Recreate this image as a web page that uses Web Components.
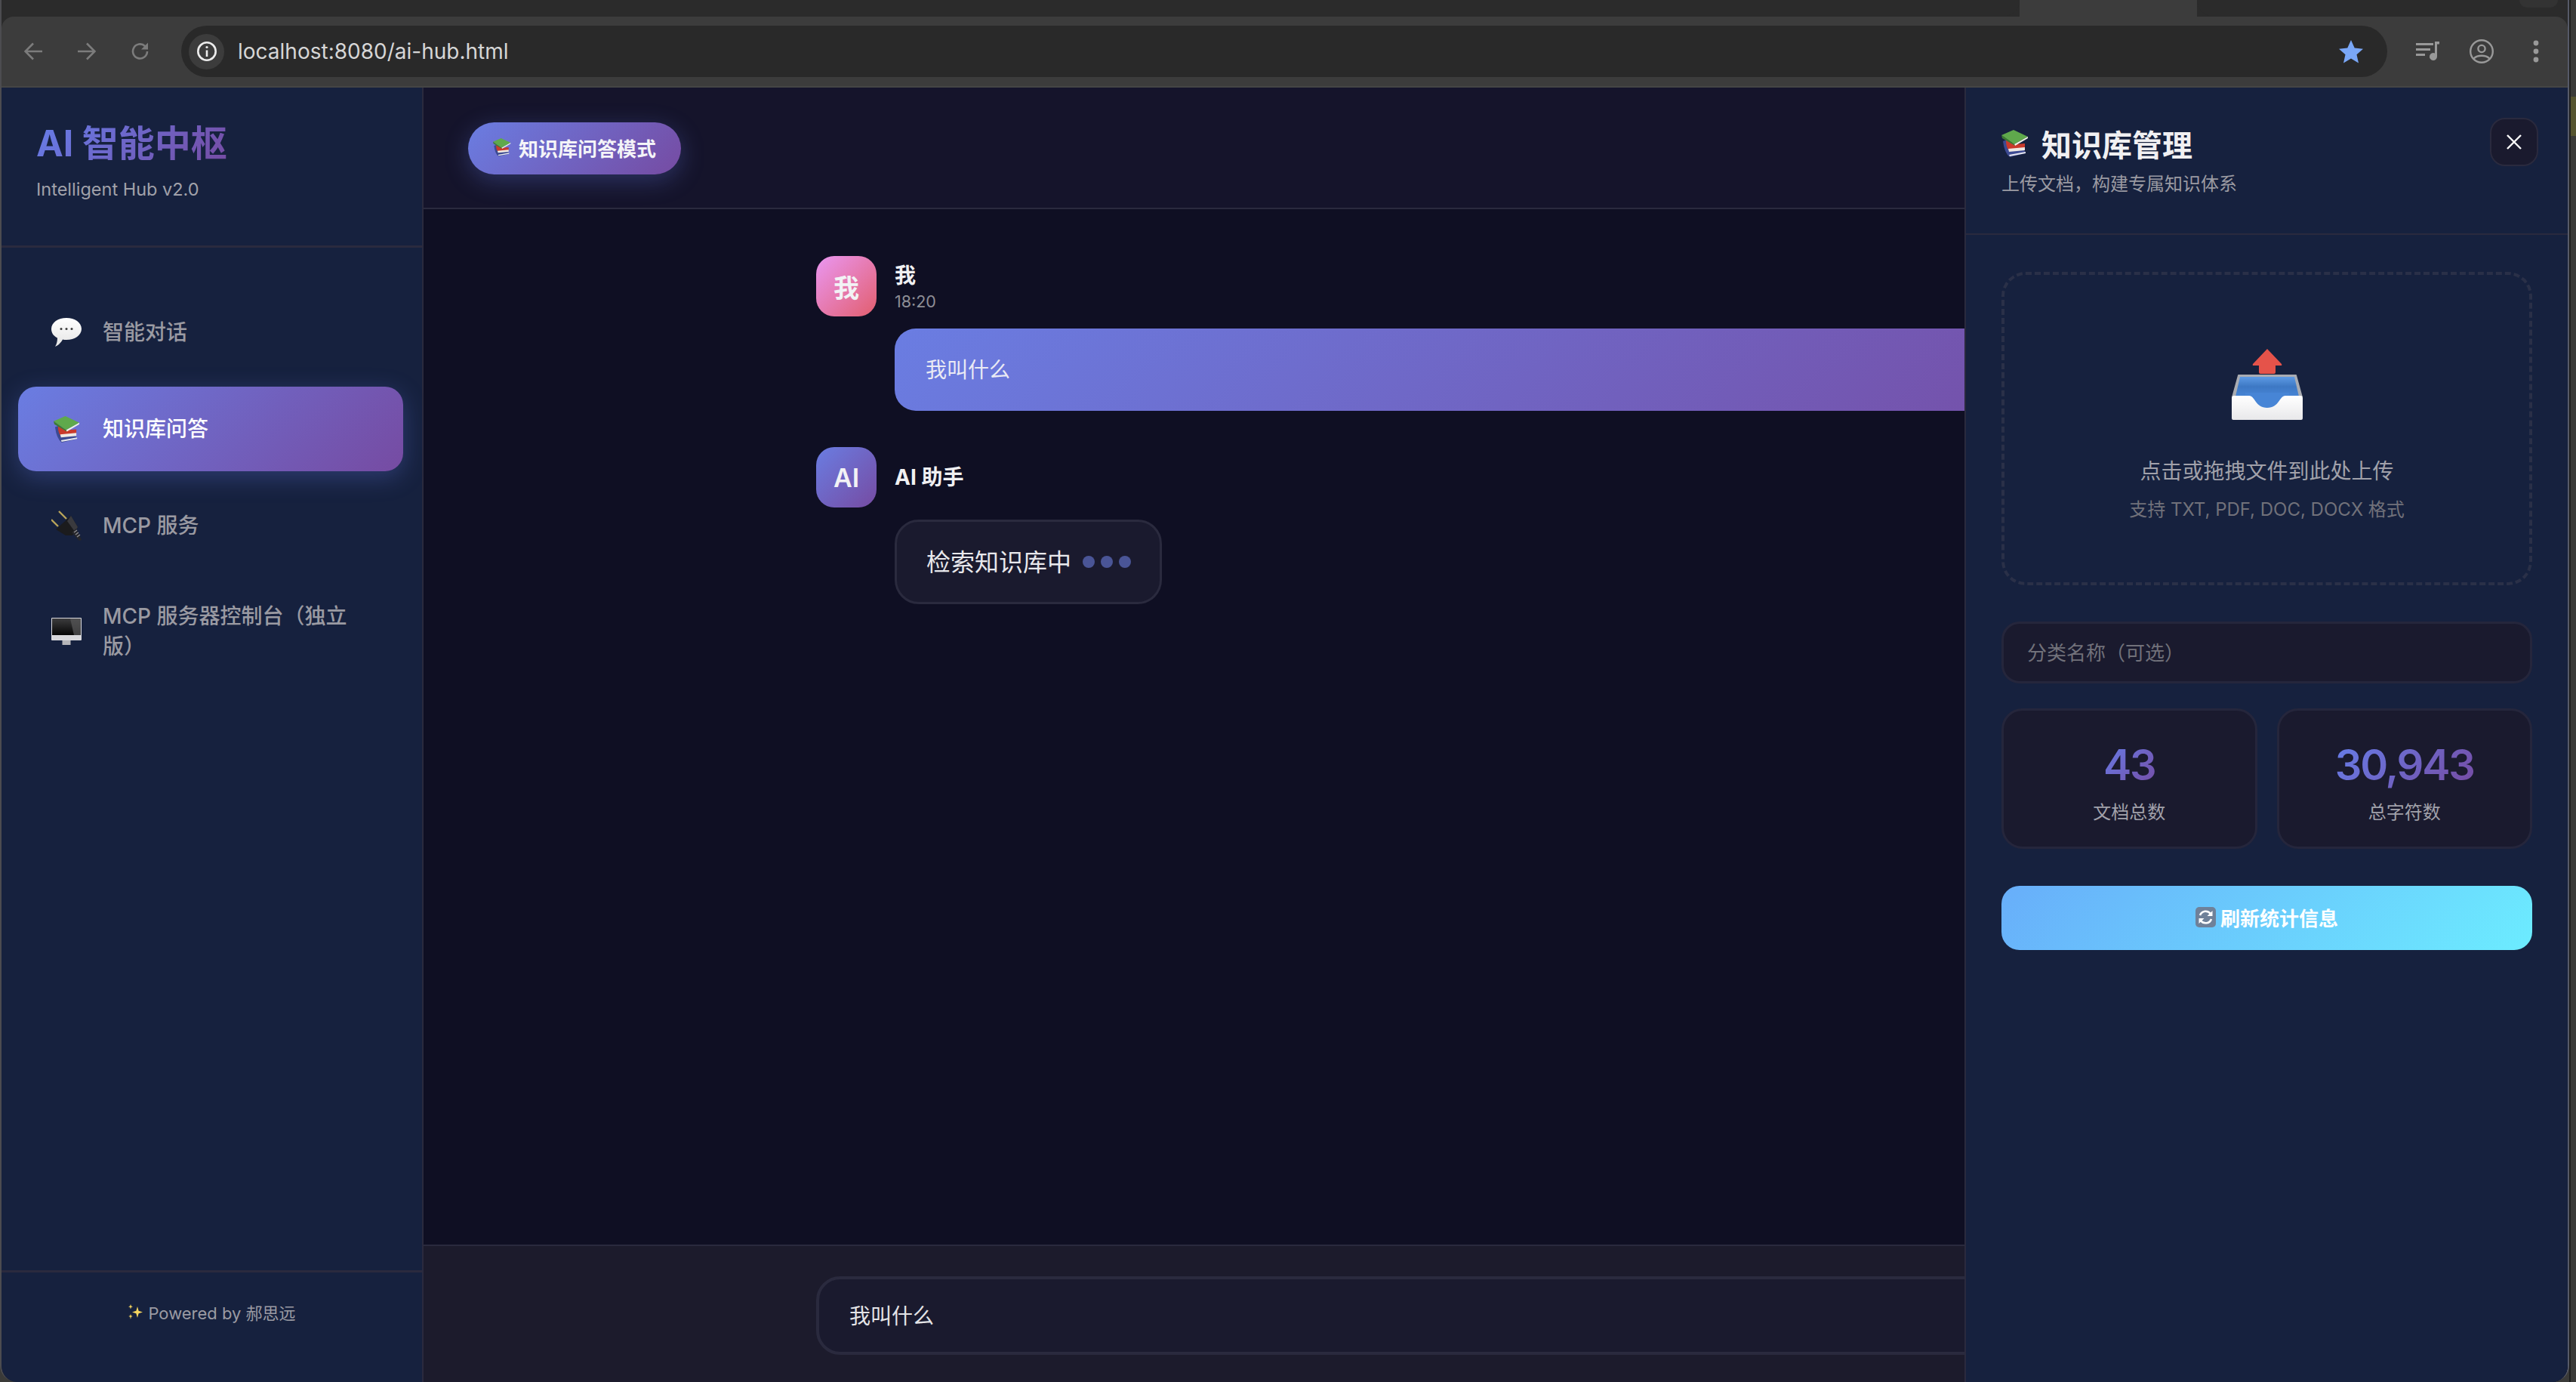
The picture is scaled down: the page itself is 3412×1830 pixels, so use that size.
<!DOCTYPE html>
<html lang="zh-CN">
<head>
<meta charset="utf-8">
<title>AI 智能中枢</title>
<style>
  html, body { margin: 0; height: 100%; overflow: hidden; background: #3a3a38; }
  body { font-family: Inter, "Noto Sans CJK SC", sans-serif; display: flex; }
</style>
</head>
<body>
<hub-window>
  <browser-chrome url="localhost:8080/ai-hub.html"></browser-chrome>
  <hub-app>
    <hub-sidebar slot="sidebar">
      <nav-item icon="balloon">智能对话</nav-item>
      <nav-item icon="books" active>知识库问答</nav-item>
      <nav-item icon="plug">MCP 服务</nav-item>
      <nav-item icon="monitor">MCP 服务器控制台&#xFF08;独立版&#xFF09;</nav-item>
    </hub-sidebar>
    <chat-main slot="main">
      <chat-message who="我" time="18:20" avatar="我" kind="user">我叫什么</chat-message>
      <chat-message who="AI 助手" avatar="AI" kind="ai"><typing-text>检索知识库中</typing-text></chat-message>
    </chat-main>
    <kb-panel slot="panel">
      <stat-card value="43" label="文档总数"></stat-card>
      <stat-card value="30,943" label="总字符数"></stat-card>
    </kb-panel>
  </hub-app>
</hub-window>
<desktop-edge></desktop-edge>

<script>
const ICONS = {
  books: `<svg viewBox="0 0 36 36" width="100%" height="100%">
    <path d="M2 15l5-2 24 15 1 3-21 5q-7-5-9-21z" fill="#3c4a92"/>
    <path d="M10 33l22-4v2l-21 4z" fill="#e6e6ee"/>
    <path d="M6 14l12 5 13-1v6L9 26q-3-4-3-12z" fill="#c93a2b"/>
    <path d="M9 25l22-2v4l-21 2z" fill="#efe9e2"/>
    <path d="M0 7L16 0l19 9-18 10z" fill="#5fa94c"/>
    <path d="M17 19l18-10v2l-17 10z" fill="#f2f2ea"/>
    <path d="M0 7l17 12 1 2L1 11z" fill="#3c7c31"/>
  </svg>`,
  balloon: `<svg viewBox="0 0 40 38" width="100%" height="100%">
    <defs><linearGradient id="bal" x1="0" y1="0" x2="0" y2="1"><stop offset="0" stop-color="#fff"/><stop offset="1" stop-color="#e4e4e4"/></linearGradient></defs>
    <path d="M20 0c11 0 20 6 20 14.500S31 29 20 29c-2 0-3.500 0-5-.5-2 4-6 8-10 9.500 2-3 3-7 3-11.500C3 24 0 20 0 14.500 0 6 9 0 20 0z" fill="url(#bal)"/>
    <circle cx="13" cy="14.500" r="1.500" fill="#3c3c3c"/><circle cx="20" cy="14.500" r="1.500" fill="#3c3c3c"/><circle cx="27" cy="14.500" r="1.500" fill="#3c3c3c"/>
  </svg>`,
  plug: `<svg viewBox="0 0 40 40" width="100%" height="100%">
    <path d="M0 12l9 9M10 1l10 10" stroke="#b9a45a" stroke-width="2.400" fill="none"/>
    <path d="M6 25L26 7l9 15-7 11h-9z" fill="#1b1b1d"/>
    <path d="M26 7l9 15-4 6-10-14z" fill="#3a3a3e"/>
    <path d="M27 29l6-5 7 15-3 1z" fill="#26262a"/>
    <path d="M30 29l4-3M32 32l4-3M34 35l4-3" stroke="#8f8f95" stroke-width="1.300"/>
  </svg>`,
  monitor: `<svg viewBox="0 0 40 36" width="100%" height="100%">
    <defs><linearGradient id="scr" x1="0" y1="0" x2="0" y2="1"><stop offset="0" stop-color="#3c3c3e"/><stop offset="1" stop-color="#050505"/></linearGradient></defs>
    <rect x="14.500" y="28" width="11" height="8" fill="#b5b5b8"/>
    <rect x="0" y="0" width="40" height="30" rx="1" fill="#d8d8dc"/>
    <rect x="1" y="1" width="38" height="22" fill="url(#scr)"/>
    <path d="M25 1h14v22h-9z" fill="#58585a" opacity=".7"/>
  </svg>`,
  inbox: `<svg viewBox="0 0 94 94" width="100%" height="100%">
    <defs>
      <linearGradient id="tray" x1="0" y1="0" x2="0" y2="1"><stop offset="0" stop-color="#5d9ae4"/><stop offset=".5" stop-color="#3d78c4"/><stop offset="1" stop-color="#4785d6"/></linearGradient>
      <linearGradient id="front" x1="0" y1="0" x2="0" y2="1"><stop offset="0" stop-color="#fff"/><stop offset="1" stop-color="#e8e8ea"/></linearGradient>
    </defs>
    <path d="M47 0l19 20q1 2-1 2h-7v9q0 2-2 2H38q-2 0-2-2v-9h-7q-2 0-1-2z" fill="#e5534a"/>
    <path d="M9 34h76q1 0 1 1l8 29H0l8-29q0-1 1-1z" fill="#a9acb2"/>
    <path d="M11 37h72l6 26H5z" fill="url(#tray)"/>
    <rect x="18" y="58" width="58" height="24" fill="#4785d6"/>
    <path d="M3 62h20c8 0 8 16 24 16s16-16 24-16h20q3 0 3 3v27q0 2-2 2H2q-2 0-2-2V65q0-3 3-3z" fill="url(#front)"/>
  </svg>`,
  sparkle: `<svg viewBox="0 0 20 20" width="100%" height="100%">
    <path d="M13 3l1.600 5.800L20 10.500l-5.400 1.700L13 18l-1.600-5.800L6 10.500l5.400-1.700z" fill="#f6d65f"/>
    <path d="M4 0l.8 2.400L7 3.200l-2.200.8L4 6.500l-.8-2.500L1 3.200l2.200-.8zM4 13l.7 2.200 2 .8-2 .7L4 20l-.7-3.300-2-.7 2-.8z" fill="#f6d65f"/>
  </svg>`,
  refresh: `<svg viewBox="0 0 27 27" width="100%" height="100%">
    <rect width="27" height="27" rx="5" fill="#6f8199"/>
    <path d="M6 11a8 8 0 0 1 14-2M21 16a8 8 0 0 1-14 2" stroke="#fff" stroke-width="2.600" fill="none"/>
    <path d="M22.500 5v7h-7zM4.500 22v-7h7z" fill="#fff"/>
  </svg>`
};

class HubIcon extends HTMLElement {
  constructor() {
    super();
    this.attachShadow({ mode: "open" });
  }
  connectedCallback() {
    const w = this.getAttribute("w") || 40;
    const h = this.getAttribute("h") || w;
    this.shadowRoot.innerHTML = `
      <style>
        :host { display: inline-block; flex: none; width: ${w}px; height: ${h}px; line-height: 0; }
      </style>
      ${ICONS[this.getAttribute("name")] || ""}
    `;
  }
}
customElements.define("hub-icon", HubIcon);

class HubWindow extends HTMLElement {
  constructor() {
    super();
    this.attachShadow({ mode: "open" });
  }
  connectedCallback() {
    this.shadowRoot.innerHTML = `
      <style>
        :host {
          display: flex; flex-direction: column; flex: none;
          box-sizing: border-box;
          width: 3403px; height: 1830px;
          background: #2b2b2b;
          border-left: 2px solid #4c4c50;
          border-right: 2px solid #565a68;
          border-radius: 0 0 22px 22px;
          overflow: hidden;
          color: #e4e4e7;
        }
      </style>
      <slot></slot>
    `;
  }
}
customElements.define("hub-window", HubWindow);

class DesktopEdge extends HTMLElement {
  constructor() {
    super();
    this.attachShadow({ mode: "open" });
  }
  connectedCallback() {
    this.shadowRoot.innerHTML = `
      <style>
        :host { display: block; flex: 1; border-left: 2px solid #1e1e1e; }
        div { margin-top: 128px; height: 52px; background: #55542f; }
      </style>
      <div></div>
    `;
  }
}
customElements.define("desktop-edge", DesktopEdge);

class BrowserChrome extends HTMLElement {
  constructor() {
    super();
    this.attachShadow({ mode: "open" });
  }
  connectedCallback() {
    this.shadowRoot.innerHTML = `
      <style>
        :host { display: block; flex: none; background: #2b2b2b; }
        .tabs { display: flex; height: 22px; }
        .tab { background: #2b2b2b; }
        .tab.a { width: 2673px; border-bottom-right-radius: 22px; }
        .gap { width: 235px; background: #3c3c3c; }
        .tab.b { width: 427px; border-bottom-left-radius: 22px; }
        .rest { flex: 1; }
        .rest i { display: block; width: 51px; height: 10px; background: #333; border-radius: 0 0 14px 14px; }
        .bar {
          display: flex; align-items: center;
          height: 94px; box-sizing: border-box;
          background: #3c3c3c;
          border-radius: 16px 16px 0 0;
          border-bottom: 2px solid #454545;
          padding-left: 30px;
        }
        .nav { display: flex; gap: 47px; margin-right: 42px; }
        .nav svg { display: block; }
        .url {
          display: flex; align-items: center;
          width: 2922px; height: 68px; box-sizing: border-box;
          background: #292929; border-radius: 34px;
          padding: 0 32px 0 10px;
        }
        .chip { width: 47px; height: 47px; border-radius: 50%; background: #3c3c3c; display: flex; align-items: center; justify-content: center; margin-right: 18px; }
        .text { flex: 1; font: 400 28px Inter, sans-serif; color: #d6d6d6; }
        .tools { display: flex; align-items: center; margin-left: 38px; gap: 40px; }
        .tools svg { display: block; }
      </style>
      <div class="tabs">
        <div class="tab a"></div><div class="gap"></div><div class="tab b"></div>
        <div class="rest"><i></i></div>
      </div>
      <div class="bar">
        <div class="nav">
          <svg width="24" height="24" viewBox="0 0 24 24" fill="none" stroke="#7c7c7c" stroke-width="2.600"><path d="M24 12H2M12 1.500L1.500 12 12 22.500"/></svg>
          <svg width="24" height="24" viewBox="0 0 24 24" fill="none" stroke="#7c7c7c" stroke-width="2.600"><path d="M0 12h22M12 1.500L22.500 12 12 22.500"/></svg>
          <svg width="24" height="24" viewBox="0 0 24 24" fill="none" stroke="#7c7c7c" stroke-width="2.600"><path d="M21 12a9.500 9.500 0 1 1-3-7l3 3"/><path d="M22 0.500v9h-9" stroke="none" fill="#7c7c7c"/></svg>
        </div>
        <div class="url">
          <div class="chip">
            <svg width="28" height="28" viewBox="0 0 28 28" fill="none" stroke="#ececec" stroke-width="2.600"><circle cx="14" cy="14" r="11.700"/><path d="M14 12.500V21"/><circle cx="14" cy="8.500" r="1.600" fill="#ececec" stroke="none"/></svg>
          </div>
          <div class="text">${this.getAttribute("url")}</div>
          <svg width="32" height="31" viewBox="0 0 32 31"><path d="M16 0l4.700 10.600 11.300 1.100-8.500 7.500 2.500 11.300L16 24.600 6 30.500l2.500-11.300L0 11.700l11.300-1.100z" fill="#7aa7f7"/></svg>
        </div>
        <div class="tools">
          <svg width="31" height="26" viewBox="0 0 31 26" fill="#999"><rect y="2" width="23" height="3"/><rect y="9" width="19" height="3"/><rect y="16" width="12" height="3"/><path d="M25 0h6v3.500h-3V20a5 5 0 1 1-3-4.600z"/></svg>
          <svg width="32" height="32" viewBox="0 0 32 32" fill="none" stroke="#999" stroke-width="2.400"><circle cx="16" cy="16" r="14.800"/><circle cx="16" cy="12.500" r="4.600"/><path d="M5.500 25.500c5-5 16-5 21 0"/></svg>
          <svg width="8" height="30" viewBox="0 0 8 30" fill="#999" style="margin-left:12px"><circle cx="4" cy="4" r="3.400"/><circle cx="4" cy="15" r="3.400"/><circle cx="4" cy="26" r="3.400"/></svg>
        </div>
      </div>
    `;
  }
}
customElements.define("browser-chrome", BrowserChrome);

class HubApp extends HTMLElement {
  constructor() {
    super();
    this.attachShadow({ mode: "open" });
  }
  connectedCallback() {
    this.shadowRoot.innerHTML = `
      <style>
        :host { display: flex; flex: 1; min-height: 0; position: relative; overflow: hidden; }
        ::slotted([slot=panel]) { position: absolute; top: 0; right: 0; bottom: 0; }
      </style>
      <slot name="sidebar"></slot>
      <slot name="main"></slot>
      <slot name="panel"></slot>
    `;
  }
}
customElements.define("hub-app", HubApp);

class HubSidebar extends HTMLElement {
  constructor() {
    super();
    this.attachShadow({ mode: "open" });
  }
  connectedCallback() {
    this.shadowRoot.innerHTML = `
      <style>
        :host {
          display: flex; flex-direction: column;
          flex: none; box-sizing: border-box; width: 559px;
          background: #16213e;
          border-right: 2px solid #2a2a3e;
        }
        header { height: 212px; box-sizing: border-box; padding: 43px 46px 0; border-bottom: 3px solid #2a2a3e; }
        h1 {
          margin: 0; font-size: 48px; line-height: 62px; font-weight: 700;
          background: linear-gradient(135deg, #667eea, #764ba2);
          -webkit-background-clip: text; background-clip: text; color: transparent;
          display: inline-block;
        }
        p { margin: 14px 0 0; font-size: 23.500px; line-height: 32px; color: #a1a1aa; }
        nav { flex: 1; display: flex; flex-direction: column; gap: 16px; padding: 56px 25px 0 22px; }
        footer {
          height: 148px; box-sizing: border-box;
          border-top: 3px solid #2a2a3e;
          display: flex; align-items: center; justify-content: center; gap: 7px;
          font-size: 22px; color: #9b9ba3;
          padding-bottom: 42px;
        }
      </style>
      <header>
        <h1>AI 智能中枢</h1>
        <p>Intelligent Hub v2.0</p>
      </header>
      <nav><slot></slot></nav>
      <footer><hub-icon name="sparkle" w="20"></hub-icon><span>Powered by 郝思远</span></footer>
    `;
  }
}
customElements.define("hub-sidebar", HubSidebar);

class NavItem extends HTMLElement {
  constructor() {
    super();
    this.attachShadow({ mode: "open" });
  }
  connectedCallback() {
    const icon = this.getAttribute("icon");
    this.shadowRoot.innerHTML = `
      <style>
        :host {
          display: flex; align-items: center; gap: 28px;
          box-sizing: border-box;
          min-height: 112px;
          padding: 28px 44px;
          border-radius: 24px;
          font-size: 28px; line-height: 40px; font-weight: 500;
          color: #9a9aa2;
        }
        :host([active]) {
          color: #fff;
          background: linear-gradient(135deg, #6a7de2, #764ba2);
          box-shadow: 0 8px 32px rgba(102,126,234,.3);
        }
        .ico { width: 40px; flex: none; display: flex; justify-content: center; }
      </style>
      <div class="ico"><hub-icon name="${icon}" w="${icon == "books" ? 35 : 40}"></hub-icon></div>
      <span><slot></slot></span>
    `;
  }
}
customElements.define("nav-item", NavItem);

class ChatMain extends HTMLElement {
  constructor() {
    super();
    this.attachShadow({ mode: "open" });
  }
  connectedCallback() {
    this.shadowRoot.innerHTML = `
      <style>
        :host { display: flex; flex-direction: column; flex: 1; min-width: 0; background: #0f0f23; }
        header {
          height: 161px; box-sizing: border-box; flex: none;
          background: #15142b;
          border-bottom: 2px solid #2a2a3e;
          padding: 46px 0 0 59px;
        }
        .pill {
          display: inline-flex; align-items: center; gap: 10px;
          height: 69px; box-sizing: border-box; padding: 0 33px 3px;
          border-radius: 35px;
          background: linear-gradient(135deg, #6a7de2, #764ba2);
          box-shadow: 0 8px 32px rgba(102,126,234,.3);
          color: #f4f4f8; font-size: 26px; font-weight: 700;
        }
        .list { flex: 1; min-height: 0; width: 1800px; margin: 0 auto; padding-top: 62px; box-sizing: border-box; display: flex; flex-direction: column; gap: 48px; }
        .input { flex: none; height: 182px; box-sizing: border-box; background: #1c1b2c; border-top: 2px solid #2a2a3e; padding-top: 40px; }
        .box {
          width: 1800px; height: 104px; margin: 0 auto; box-sizing: border-box;
          background: #1a1a2e; border: 4px solid #2a2a3e; border-radius: 32px;
          padding: 0 40px 3px; display: flex; align-items: center;
          font-size: 28px; color: #e4e4e7;
        }
      </style>
      <header><div class="pill"><hub-icon name="books" w="24"></hub-icon><span>知识库问答模式</span></div></header>
      <div class="list"><slot></slot></div>
      <div class="input"><div class="box">我叫什么</div></div>
    `;
  }
}
customElements.define("chat-main", ChatMain);

class ChatMessage extends HTMLElement {
  constructor() {
    super();
    this.attachShadow({ mode: "open" });
  }
  connectedCallback() {
    const time = this.getAttribute("time");
    this.shadowRoot.innerHTML = `
      <style>
        :host { display: block; }
        .head { display: flex; align-items: center; gap: 24px; margin-bottom: 16px; }
        .avatar {
          width: 80px; height: 80px; border-radius: 24px; flex: none;
          display: flex; align-items: center; justify-content: center;
          font-size: 34px; font-weight: 600; color: #f2f2f5;
        }
        :host([kind=user]) .avatar { background: linear-gradient(135deg, #ea97f2, #e25e6e); }
        :host([kind=ai]) .avatar { background: linear-gradient(135deg, #6a7de2, #764ba2); }
        .name { font-size: 28px; line-height: 36px; font-weight: 700; color: #f0f0f2; }
        .time { margin-top: 3px; font-size: 21.500px; line-height: 26px; color: #8d8d95; }
        .body { margin-left: 104px; }
        :host([kind=user]) .body {
          background: linear-gradient(135deg, #6a7de2, #764ba2);
          border-radius: 28px;
          height: 109px; box-sizing: border-box; padding: 0 41px 3px;
          display: flex; align-items: center;
          font-size: 28px; color: #eaeaf4;
        }
        :host([kind=ai]) .body {
          display: inline-flex; align-items: center;
          height: 112px; box-sizing: border-box; padding: 0 38px 0 39px;
          background: #1a1a2e; border: 3px solid #2a2a3e; border-radius: 32px;
          font-size: 32px; color: #e8e8ec;
        }
      </style>
      <div class="head">
        <div class="avatar">${this.getAttribute("avatar")}</div>
        <div>
          <div class="name">${this.getAttribute("who")}</div>
          ${time ? `<div class="time">${time}</div>` : ""}
        </div>
      </div>
      <div class="body"><slot></slot></div>
    `;
  }
}
customElements.define("chat-message", ChatMessage);

class TypingText extends HTMLElement {
  constructor() {
    super();
    this.attachShadow({ mode: "open" });
  }
  connectedCallback() {
    this.shadowRoot.innerHTML = `
      <style>
        :host { display: inline-flex; align-items: center; gap: 15px; }
        span { position: relative; top: -2px; }
        .dots { display: flex; gap: 8px; }
        i { display: block; width: 16px; height: 16px; border-radius: 50%; background: #4a5596; }
      </style>
      <span><slot></slot></span>
      <div class="dots"><i></i><i></i><i></i></div>
    `;
  }
}
customElements.define("typing-text", TypingText);

class KbPanel extends HTMLElement {
  constructor() {
    super();
    this.attachShadow({ mode: "open" });
  }
  connectedCallback() {
    this.shadowRoot.innerHTML = `
      <style>
        :host {
          display: flex; flex-direction: column;
          box-sizing: border-box; width: 799px;
          background: #16213e;
          border-left: 2px solid #2a2a3e;
        }
        header { height: 195px; box-sizing: border-box; flex: none; border-bottom: 2px solid #2a2a3e; padding: 52px 47px 0; position: relative; }
        .title { display: flex; align-items: center; gap: 17px; height: 44px; font-size: 40px; font-weight: 700; color: #f0f0f2; }
        .sub { margin-top: 15px; font-size: 24px; line-height: 34px; color: #9a9aa2; }
        .close {
          position: absolute; top: 40px; right: 39px;
          width: 64px; height: 64px; box-sizing: border-box;
          background: #1a1a2e; border: 2px solid #2a2a3e; border-radius: 20px;
          display: flex; align-items: center; justify-content: center;
        }
        .body { padding: 49px 47px 0; display: flex; flex-direction: column; }
        .drop {
          height: 415px; box-sizing: border-box;
          border: 4px dashed #2a3048; border-radius: 32px;
          display: flex; flex-direction: column; align-items: center;
          padding-top: 98px;
        }
        .drop b { margin-top: 48px; font-weight: 400; font-size: 28px; line-height: 40px; color: #a1a1aa; }
        .drop small { margin-top: 14px; font-size: 24px; line-height: 34px; color: #71717a; }
        .field {
          margin-top: 48px; height: 82px; box-sizing: border-box;
          background: #1a1a2e; border: 3px solid #25263c; border-radius: 24px;
          padding: 0 31px 3px; display: flex; align-items: center;
          font-size: 26px; color: #71717a;
        }
        .stats { margin-top: 33px; display: grid; grid-template-columns: 1fr 1fr; gap: 26px; }
        button {
          margin-top: 49px; height: 85px; border: 0; border-radius: 24px; padding: 0 0 2px;
          background: linear-gradient(135deg, #68aefa, #6cecff);
          color: #fff; font: 700 26px Inter, "Noto Sans CJK SC", sans-serif;
          display: flex; align-items: center; justify-content: center; gap: 6px;
        }
      </style>
      <header>
        <div class="title"><hub-icon name="books" w="36"></hub-icon><span>知识库管理</span></div>
        <div class="sub">上传文档&#xFF0C;构建专属知识体系</div>
        <div class="close"><svg width="20" height="20" viewBox="0 0 20 20" stroke="#fff" stroke-width="2.400"><path d="M1 1l18 18M19 1L1 19"/></svg></div>
      </header>
      <div class="body">
        <div class="drop">
          <hub-icon name="inbox" w="94"></hub-icon>
          <b>点击或拖拽文件到此处上传</b>
          <small>支持 TXT, PDF, DOC, DOCX 格式</small>
        </div>
        <div class="field">分类名称&#xFF08;可选&#xFF09;</div>
        <div class="stats"><slot></slot></div>
        <button><hub-icon name="refresh" w="27"></hub-icon><span>刷新统计信息</span></button>
      </div>
    `;
  }
}
customElements.define("kb-panel", KbPanel);

class StatCard extends HTMLElement {
  constructor() {
    super();
    this.attachShadow({ mode: "open" });
  }
  connectedCallback() {
    this.shadowRoot.innerHTML = `
      <style>
        :host {
          display: flex; flex-direction: column; align-items: center; justify-content: center;
          height: 186px; box-sizing: border-box; padding-top: 10px;
          background: #1a1a2e; border: 3px solid #25263c; border-radius: 28px;
        }
        .num {
          font-size: 56px; line-height: 68px; font-weight: 600; letter-spacing: -2.200px;
          background: linear-gradient(135deg, #667eea, #764ba2);
          -webkit-background-clip: text; background-clip: text; color: transparent;
        }
        .label { margin-top: 12px; font-size: 24px; line-height: 34px; color: #a1a1aa; }
      </style>
      <div class="num">${this.getAttribute("value")}</div>
      <div class="label">${this.getAttribute("label")}</div>
    `;
  }
}
customElements.define("stat-card", StatCard);
</script>
</body>
</html>
